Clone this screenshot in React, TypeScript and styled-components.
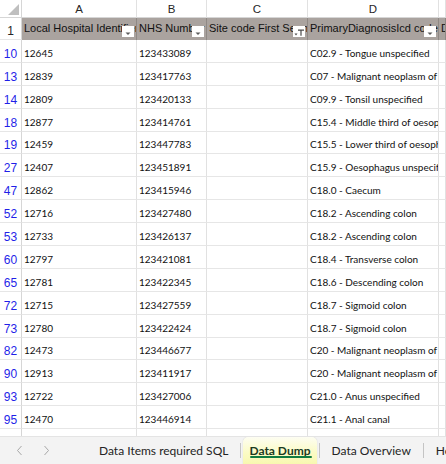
import { Fragment } from "react";
import styled, { createGlobalStyle } from "styled-components";

const GlobalStyle = createGlobalStyle`
  html, body {
    margin: 0;
    padding: 0;
    background: #ffffff;
    overflow: hidden;
  }
`;

const COLS = "22px 115px 70px 101px 131px 1fr";
const ROW_H = 22.9;

const Page = styled.div`
  width: 446px;
  height: 464px;
  display: flex;
  flex-direction: column;
  overflow: hidden;
`;

const Grid = styled.div`
  flex: 1;
  display: grid;
  grid-template-columns: ${COLS};
  grid-auto-rows: ${ROW_H}px;
  grid-template-rows: 18px 22px;
  align-content: start;
  overflow: hidden;
  background: #ffffff;
`;

const Corner = styled.div`
  background: #ffffff;
  border-right: 1px solid #d6d6d6;
  border-bottom: 1px solid #d6d6d6;
  display: flex;
  align-items: flex-end;
  justify-content: flex-end;
  padding: 0 2px 2px 0;
`;

const ColLetter = styled.div`
  background: #ffffff;
  border-right: 1px solid #e1e1e1;
  border-bottom: 1px solid #d6d6d6;
  font-family: "Liberation Sans", Arial, sans-serif;
  font-size: 11.5px;
  color: #262626;
  display: flex;
  align-items: center;
  justify-content: center;
`;

const RowNum = styled.div<{ $head?: boolean }>`
  border-right: 1px solid #d6d6d6;
  border-bottom: 1px solid #e6e6e6;
  font-family: "Liberation Sans", Arial, sans-serif;
  font-size: 12px;
  color: ${(p) => (p.$head ? "#262626" : "#1f1fe8")};
  display: flex;
  align-items: flex-end;
  justify-content: center;
  padding-bottom: 1px;
  box-sizing: border-box;
`;

const HeadCell = styled.div`
  position: relative;
  background: #aaa39f;
  border-right: 1px solid #8f8985;
  font-family: "Liberation Sans", Arial, sans-serif;
  font-size: 11px;
  color: #111111;
  white-space: nowrap;
  overflow: hidden;
  display: flex;
  align-items: center;
  padding: 0 0 2px 2px;
  box-sizing: border-box;
`;

const FilterBtn = styled.div`
  position: absolute;
  right: 2px;
  bottom: 3px;
  width: 12px;
  height: 11px;
  background: #ffffff;
  display: flex;
  align-items: center;
  justify-content: center;
`;

const Cell = styled.div`
  border-right: 1px solid #e1e1e1;
  border-bottom: 1px solid #e6e6e6;
  font-family: Lato, "Liberation Sans", sans-serif;
  font-size: 10px;
  color: #111111;
  white-space: nowrap;
  overflow: hidden;
  display: flex;
  align-items: flex-end;
  padding: 0 0 3px 2px;
  box-sizing: border-box;
`;

const TabBar = styled.div`
  height: 27px;
  flex-shrink: 0;
  background: #f3f3f3;
  border-top: 1px solid #e4e4e4;
  display: flex;
  align-items: stretch;
  font-family: Lato, "Noto Sans", sans-serif;
  font-size: 12px;
  color: #242424;
  overflow: hidden;
`;

const Nav = styled.div`
  width: 89px;
  flex-shrink: 0;
  display: flex;
  align-items: center;
  padding-left: 14px;
  gap: 16px;
  box-sizing: border-box;
`;

const NavArrow = styled.span`
  width: 11px;
  display: flex;
  justify-content: center;
`;

const Tab = styled.div<{ $active?: boolean }>`
  position: relative;
  flex-shrink: 0;
  display: flex;
  align-items: center;
  padding: 0 ${(p) => (p.$active ? "6px" : "10px")};
  white-space: nowrap;
  font-weight: ${(p) => (p.$active ? 700 : 400)};
  color: ${(p) => (p.$active ? "#1b3a1f" : "#242424")};
  background: ${(p) =>
    p.$active ? "linear-gradient(#fdfdf2, #fbfbc4 60%, #f8f8b0)" : "transparent"};
  border-radius: ${(p) => (p.$active ? "5px 5px 0 0" : "0")};
  box-shadow: ${(p) => (p.$active ? "0 0 1px rgba(0,0,0,0.25)" : "none")};
`;

const Underline = styled.div`
  position: absolute;
  left: 7px;
  right: 5px;
  bottom: 6px;
  height: 2px;
  border-radius: 1px;
  background: #107c41;
`;

const Sep = styled.div`
  width: 1px;
  flex-shrink: 0;
  align-self: center;
  height: 15px;
  background: #c4c4c4;
  margin: 0 2px;
`;

const rows: [number, string, string, string][] = [
  [10, "12645", "123433089", "C02.9 - Tongue unspecified"],
  [13, "12839", "123417763", "C07 - Malignant neoplasm of palate"],
  [14, "12809", "123420133", "C09.9 - Tonsil unspecified"],
  [18, "12877", "123414761", "C15.4 - Middle third of oesophagus"],
  [19, "12459", "123447783", "C15.5 - Lower third of oesophagus"],
  [27, "12407", "123451891", "C15.9 - Oesophagus unspecified"],
  [47, "12862", "123415946", "C18.0 - Caecum"],
  [52, "12716", "123427480", "C18.2 - Ascending colon"],
  [53, "12733", "123426137", "C18.2 - Ascending colon"],
  [60, "12797", "123421081", "C18.4 - Transverse colon"],
  [65, "12781", "123422345", "C18.6 - Descending colon"],
  [72, "12715", "123427559", "C18.7 - Sigmoid colon"],
  [73, "12780", "123422424", "C18.7 - Sigmoid colon"],
  [82, "12473", "123446677", "C20 - Malignant neoplasm of rectum"],
  [90, "12913", "123411917", "C20 - Malignant neoplasm of rectum"],
  [93, "12722", "123427006", "C21.0 - Anus unspecified"],
  [95, "12470", "123446914", "C21.1 - Anal canal"],
];

const DropArrow = () => (
  <svg width="12" height="11" viewBox="0 0 12 11">
    <path d="M3.5 6.5h5L6 9z" fill="#5a5a5a" />
  </svg>
);

const FilterIcon = () => (
  <svg width="12" height="11" viewBox="0 0 12 11">
    <path d="M1.5 7.5h3L3 9.5z" fill="#4a4a4a" />
    <path d="M5 3.5h6v1.2H8.6v5H7.4v-5H5z" fill="#4a4a4a" />
  </svg>
);

const headers: { label: string; filtered?: boolean; noBtn?: boolean }[] = [
  { label: "Local Hospital Identifier" },
  { label: "NHS Number" },
  { label: "Site code First Seen", filtered: true },
  { label: "PrimaryDiagnosisIcd code" },
  { label: "DiagnosisDate", noBtn: true },
];

const App = () => {
  return (
    <Page>
      <GlobalStyle />
      <Grid>
        <Corner>
          <svg width="11" height="11" viewBox="0 0 11 11">
            <path d="M11 0v11H0z" fill="#bfbfbf" />
          </svg>
        </Corner>
        {["A", "B", "C", "D", ""].map((l, i) => (
          <ColLetter key={i}>{l}</ColLetter>
        ))}

        <RowNum $head>1</RowNum>
        {headers.map((h) => (
          <HeadCell key={h.label}>
            {h.label}
            {!h.noBtn && (
              <FilterBtn>{h.filtered ? <FilterIcon /> : <DropArrow />}</FilterBtn>
            )}
          </HeadCell>
        ))}

        {rows.map(([n, id, nhs, diag]) => (
          <Fragment key={n}>
            <RowNum>{n}</RowNum>
            <Cell>{id}</Cell>
            <Cell>{nhs}</Cell>
            <Cell />
            <Cell>{diag}</Cell>
            <Cell />
          </Fragment>
        ))}
        <RowNum />
        <Cell />
        <Cell />
        <Cell />
        <Cell />
        <Cell />
      </Grid>
      <TabBar>
        <Nav>
          <NavArrow>
            <svg width="7" height="11" viewBox="0 0 7 11">
              <path d="M5.5 1L1.5 5.5 5.5 10" fill="none" stroke="#a8a8a8" strokeWidth="1" />
            </svg>
          </NavArrow>
          <NavArrow>
            <svg width="7" height="11" viewBox="0 0 7 11">
              <path d="M1.5 1L5.5 5.5 1.5 10" fill="none" stroke="#a8a8a8" strokeWidth="1" />
            </svg>
          </NavArrow>
        </Nav>
        <Tab>Data Items required SQL</Tab>
        <Sep />
        <Tab $active>
          Data Dump
          <Underline />
        </Tab>
        <Sep />
        <Tab>Data Overview</Tab>
        <Sep />
        <Tab>Help</Tab>
      </TabBar>
    </Page>
  );
};

export default App;
